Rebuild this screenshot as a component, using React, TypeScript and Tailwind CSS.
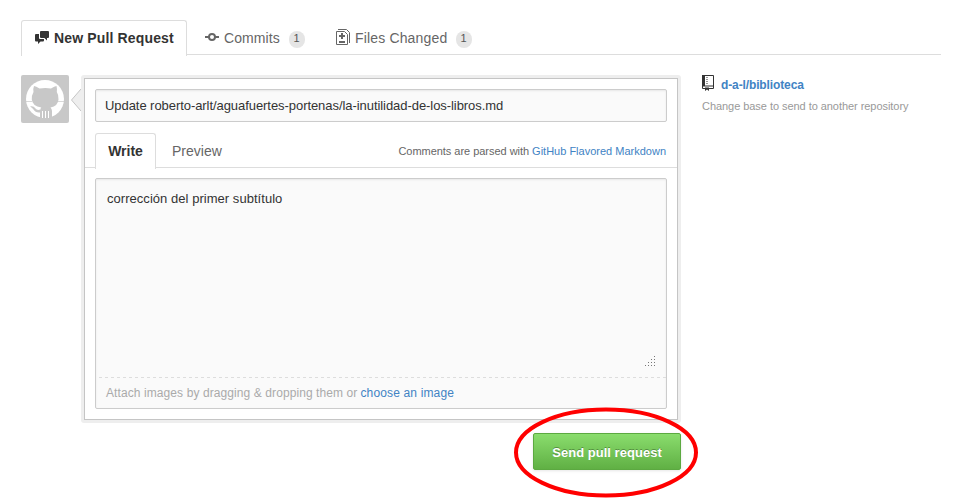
import React from 'react';

function DiscussionIcon() {
  return (
    <svg width="14" height="14" viewBox="0 0 14 14" fill="#333" className="relative -top-px shrink-0">
      <path d="M6 0h7q1 0 1 1v5q0 1-1 1h-1v2.600L9.400 7H6q-1 0-1-1V1q0-1 1-1z" />
      <path d="M1 3h3v4q0 1 1 1h4v1.500q0 1-1 1H5.500L3 13v-2.500H1q-1 0-1-1V4q0-1 1-1z" />
    </svg>
  );
}

function CommitIcon() {
  return (
    <svg width="14" height="8" viewBox="0 0 14 8" fill="none" stroke="#666" strokeWidth="2" className="relative -top-px shrink-0">
      <circle cx="7" cy="4" r="3" />
      <path d="M0 4h4M10 4h4" />
    </svg>
  );
}

function DiffIcon() {
  return (
    <svg width="14" height="16" viewBox="0 0 14 16" fill="none" stroke="#666" className="relative -top-px shrink-0">
      <path d="M.5 2.500h8l3 3v10H.5z" />
      <path d="M2 .5h8.500l3 3v10.500" />
      <path strokeWidth="2" d="M3 7h6M6 4v6M3 13h6" />
    </svg>
  );
}

function RepoIcon() {
  return (
    <svg width="12" height="16" viewBox="0 0 12 16" className="relative -top-0.5 shrink-0">
      <path fill="none" stroke="#333" d="M.5.5h11v13H.5z" />
      <path fill="#333" d="M0 0h3v11H0zM0 10.500h12v1H0zM3 12.500h4V16l-2-1.500L3 16zM4.500 2h1v1h-1zM4.500 4h1v1h-1zM4.500 6h1v1h-1zM4.500 8h1v1h-1z" />
    </svg>
  );
}

function Avatar() {
  return (
    <svg width="48" height="48" viewBox="0 0 48 48" className="shrink-0">
      <rect width="48" height="48" rx="2" fill="#c8c8c8" />
      <circle cx="24" cy="24" r="19" fill="#fff" />
      <path fill="#c8c8c8" d="M13 11q2 0 5.500 2.500 6-1.200 11.500 0 3.500-2.500 5.500-2.500.8 3 .3 6 2 3 1.700 7.500-.5 6.500-8 8 1.500 1.500 1.500 3.500v8H19v-6.500q-4.500.5-6.500-3-1.500-2-3.500-3 3.500-1 5.500 2 1.500 2.200 5 1 0-1.300.8-2-9-1.500-9.500-8-.3-4 1.700-7.500-.7-3 .5-6z" />
      <path stroke="#fff" d="M21.500 36v7M24.500 36v7M27.500 36v7" />
      <path stroke="#c8c8c8" strokeWidth=".7" d="M5 26.500h6M43 26.500h-6" />
    </svg>
  );
}

function Badge() {
  return (
    <span className="relative top-px flex h-[17px] w-4 items-center justify-center rounded-full bg-[#e5e5e5] pb-px pr-px text-[11px] leading-none text-[#555]">1</span>
  );
}

export default function App() {
  return (
    <div className="relative h-[501px] w-[961px] overflow-hidden bg-white pl-[21px] pt-5 font-['Liberation_Sans',sans-serif] text-[#333]">
      <nav className="flex h-[35px] w-[920px] border-b border-[#ddd] text-[14px] text-[#666]">
        <div className="flex h-9 w-[166px] items-center rounded-t-[3px] border border-b-0 border-[#ddd] bg-white pl-[13px] font-bold text-[#333]">
          <DiscussionIcon />
          <span className="ml-[5px] whitespace-nowrap tracking-[0.15px]">New Pull Request</span>
        </div>
        <div className="flex h-9 items-center pl-[18px]">
          <CommitIcon />
          <span className="ml-[5px] w-[65px] pt-px text-[14px] tracking-[0.1px]">Commits</span>
          <Badge />
        </div>
        <div className="flex h-9 items-center pl-[31px]">
          <DiffIcon />
          <span className="ml-[5px] w-[101px] whitespace-nowrap pt-px text-[14px] tracking-[0.16px]">Files Changed</span>
          <Badge />
        </div>
      </nav>

      <main className="mt-5 flex items-start">
        <Avatar />
        <svg width="10" height="22" viewBox="0 0 10 22" className="ml-[2px] mt-[14px] shrink-0">
          <path d="M10 0L.5 11 10 22" fill="#eee" stroke="#c5c5c5" />
        </svg>
        <div className="w-[600px] shrink-0">
          <section className="h-[348px] rounded-[3px] bg-[#eee] p-[3px]">
            <div className="h-[342px] border border-[#c5c5c5] bg-white pt-[10px]">
              <div className="mx-[10px] flex h-[33px] w-[572px] items-center rounded-[2px] border border-[#ccc] bg-[#fafafa] pl-[9px] text-[13px] shadow-[inset_0_1px_2px_rgba(0,0,0,0.075)]">
                <span className="whitespace-nowrap tracking-[-0.06px]">Update roberto-arlt/aguafuertes-portenas/la-inutilidad-de-los-libros.md</span>
              </div>
              <div className="mt-[11px] flex h-[35px] border-b border-[#ddd] pl-[10px]">
                <div className="flex h-9 w-[61px] items-center justify-center rounded-t-[3px] border border-b-0 border-[#ddd] bg-white text-[14px] font-bold">Write</div>
                <div className="flex h-9 items-center pl-4 pt-px text-[14px] tracking-[0.02px] text-[#666]">Preview</div>
                <p className="ml-auto mr-[11px] flex h-9 items-center gap-[3px] whitespace-nowrap text-[11px] text-[#666]">
                  <span className="tracking-[-0.03px]">Comments are parsed with</span>
                  <span className="text-[#4183c4]">GitHub Flavored Markdown</span>
                </p>
              </div>
              <div className="mx-[10px] mt-[10px] flex h-[231px] w-[572px] flex-col rounded-[2px] border border-[#ccc] bg-[#fafafa] shadow-[inset_0_1px_2px_rgba(0,0,0,0.075)]">
                <div className="flex h-[198px] flex-col justify-between pl-[11px] pt-[12px]">
                  <span className="text-[13px] leading-4 tracking-[0.04px]">corrección del primer subtítulo</span>
                  <svg width="11" height="11" viewBox="0 0 11 11" fill="#777" shapeRendering="crispEdges" className="mb-[10px] mr-[10px] self-end">
                    <path d="M9 0h1v1H9zM6 3h1v1H6zM9 3h1v1H9zM3 6h1v1H3zM6 6h1v1H6zM9 6h1v1H9zM0 9h1v1H0zM3 9h1v1H3zM6 9h1v1H6zM9 9h1v1H9z" />
                  </svg>
                </div>
                <svg width="567" height="1" className="ml-[3px]">
                  <path d="M0 .5h567" stroke="#ddd" strokeDasharray="3 3" />
                </svg>
                <p className="flex h-[30px] items-center gap-[3px] pl-[10px] text-[12px] text-[#aaa]">
                  <span className="tracking-[0.09px]">Attach images by dragging &amp; dropping them or</span>
                  <span className="tracking-[0.15px] text-[#4183c4]">choose an image</span>
                </p>
              </div>
            </div>
          </section>
          <button className="ml-auto mt-[10px] flex h-[37px] w-[148px] items-center justify-center rounded-[2px] border border-[#5ca941] bg-linear-to-b from-[#8add6d] to-[#60b044] pt-0.5 text-[13px] font-bold tracking-[0.03px] text-white shadow-[0_1px_3px_rgba(0,0,0,0.1)] [text-shadow:0_-1px_0_rgba(0,0,0,0.3)]">
            Send pull request
          </button>
        </div>
        <aside className="ml-[21px]">
          <div className="flex h-[19px] items-center">
            <RepoIcon />
            <span className="ml-[7px] text-[12px] font-bold tracking-[-0.12px] text-[#4183c4]">d-a-l/biblioteca</span>
          </div>
          <p className="mt-1 whitespace-nowrap text-[11px] leading-4 tracking-[-0.05px] text-[#999]">Change base to send to another repository</p>
        </aside>
      </main>

      <svg width="188" height="94" viewBox="0 0 188 94" className="pointer-events-none absolute left-[512px] top-[406px]">
        <ellipse cx="94" cy="46.500" rx="90" ry="43" fill="none" stroke="#f00" strokeWidth="4" />
      </svg>
    </div>
  );
}
